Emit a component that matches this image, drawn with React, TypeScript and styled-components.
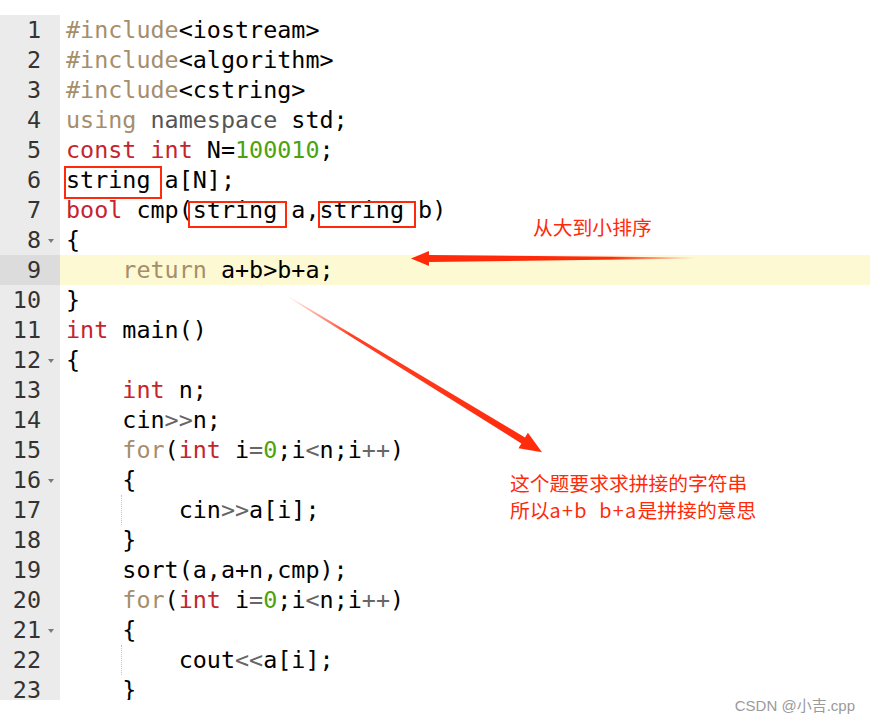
import React from "react";
import styled, { createGlobalStyle } from "styled-components";

const GlobalStyle = createGlobalStyle`
  html, body { margin: 0; padding: 0; background: #ffffff; }
  body { width: 870px; height: 722px; overflow: hidden; }
`;

const MONO = `"DejaVu Sans Mono", "Liberation Mono", monospace`;
const CJK = `"Noto Sans CJK SC", "Noto Sans", sans-serif`;

const Page = styled.div`
  position: relative;
  box-sizing: border-box;
  width: 870px;
  height: 722px;
  padding-top: 15px;
  background: #ffffff;
`;

const Editor = styled.div`
  display: flex;
  height: 685px;
  overflow: hidden;
  font-family: ${MONO};
  font-size: 23.4px;
  line-height: 30px;
`;

const Gutter = styled.div`
  width: 60px;
  flex: none;
  background: #ebebeb;
  display: flex;
  flex-direction: column;
`;

const GutterCell = styled.div<{ $active?: boolean }>`
  display: grid;
  grid-template-columns: 41px 19px;
  align-items: center;
  height: 30px;
  flex: none;
  color: #333333;
  background: ${(p) => (p.$active ? "#dcdcdc" : "transparent")};
`;

const LineNo = styled.span`
  text-align: right;
`;

const Fold = styled.span<{ $show?: boolean }>`
  justify-self: start;
  margin-left: 7px;
  margin-top: 1px;
  width: 0;
  height: 0;
  border-left: 3.5px solid transparent;
  border-right: 3.5px solid transparent;
  border-top: 4px solid ${(p) => (p.$show ? "#7a7a7a" : "transparent")};
`;

const Code = styled.div`
  flex: 1;
  display: flex;
  flex-direction: column;
`;

const Line = styled.div<{ $active?: boolean }>`
  height: 30px;
  flex: none;
  padding-left: 6px;
  white-space: pre;
  color: #000000;
  background: ${(p) => (p.$active ? "#fdf9d2" : "transparent")};
`;

const COLORS: Record<string, string> = {
  kw: "#c4252c",
  pp: "#a58e6c",
  num: "#4aa30e",
  ns: "#555555",
  op: "#666666",
  "": "#000000",
};

const Tok = styled.span<{ $k: string }>`
  color: ${(p) => COLORS[p.$k] || "#000000"};
`;

const Boxed = styled.span<{ $l: number; $r: number; $t: number; $b: number }>`
  position: relative;
  display: inline-block;
  height: 30px;
  vertical-align: top;
  &::after {
    content: "";
    position: absolute;
    left: ${(p) => p.$l}px;
    right: ${(p) => p.$r}px;
    top: ${(p) => p.$t}px;
    bottom: ${(p) => p.$b}px;
    border: 2px solid #ff2a0a;
  }
`;

const Guide = styled.span`
  display: inline-block;
  width: 0;
  height: 30px;
  vertical-align: top;
  margin-left: -1px;
  border-left: 1px dotted #c4c4c4;
  box-sizing: border-box;
`;

const Overlay = styled.svg`
  position: absolute;
  left: 0;
  top: 0;
  pointer-events: none;
`;

const Note = styled.div<{ $x: number; $y: number }>`
  position: absolute;
  left: ${(p) => p.$x}px;
  top: ${(p) => p.$y}px;
  font-family: ${CJK};
  font-size: 19.8px;
  line-height: 27px;
  color: #ff2a0a;
  white-space: pre;
`;

const Latin = styled.span`
  letter-spacing: 1.3px;
`;

const Watermark = styled.div`
  position: absolute;
  right: 15px;
  bottom: 8px;
  font-family: "Liberation Sans", "Noto Sans CJK SC", sans-serif;
  font-size: 15px;
  line-height: 17px;
  color: #9a9a9a;
`;

type Seg =
  | { t: string; k?: string }
  | { box: [number, number, number, number]; t: string }
  | { guide: true };

const s = (t: string, k = ""): Seg => ({ t, k });
const box = (t: string, l: number, r: number, top: number, b: number): Seg => ({ t, box: [l, r, top, b] });
const guide: Seg = { guide: true };

const forLine: Seg[] = [
  s("    "), s("for", "pp"), s("("), s("int", "kw"), s(" i"), s("=", "op"), s("0", "num"),
  s(";i"), s("<", "op"), s("n;i"), s("++", "op"), s(")"),
];

const LINES: Seg[][] = [
  [s("#include", "pp"), s("<iostream>")],
  [s("#include", "pp"), s("<algorithm>")],
  [s("#include", "pp"), s("<cstring>")],
  [s("using", "pp"), s(" "), s("namespace", "ns"), s(" std;")],
  [s("const", "kw"), s(" "), s("int", "kw"), s(" N="), s("100010", "num"), s(";")],
  [box("string ", -2, 3, 1, -4), s("a[N];")],
  [s("bool", "kw"), s(" cmp("), box("string ", -5, 4, 6, -3), s("a,"), box("string ", -2, 2, 6, -3), s("b)")],
  [s("{")],
  [s("    "), s("return", "pp"), s(" a+b>b+a;")],
  [s("}")],
  [s("int", "kw"), s(" main()")],
  [s("{")],
  [s("    "), s("int", "kw"), s(" n;")],
  [s("    cin"), s(">>", "op"), s("n;")],
  forLine,
  [s("    {")],
  [s("    "), guide, s("    cin"), s(">>", "op"), s("a[i];")],
  [s("    }")],
  [s("    sort(a,a+n,cmp);")],
  forLine,
  [s("    {")],
  [s("    "), guide, s("    cout"), s("<<", "op"), s("a[i];")],
  [s("    }")],
];

const FOLDS = new Set([8, 12, 16, 21]);
const ACTIVE = 9;

function renderSeg(seg: Seg, i: number) {
  if ("guide" in seg) return <Guide key={i} />;
  if ("box" in seg) {
    const [l, r, t, b] = seg.box;
    return (
      <Boxed key={i} $l={l} $r={r} $t={t} $b={b}>
        {seg.t}
      </Boxed>
    );
  }
  return (
    <Tok key={i} $k={seg.k || ""}>
      {seg.t}
    </Tok>
  );
}

export default function App() {
  return (
    <Page>
      <GlobalStyle />
      <Editor>
        <Gutter>
          {LINES.map((_, i) => (
            <GutterCell key={i} $active={i + 1 === ACTIVE}>
              <LineNo>{i + 1}</LineNo>
              <Fold $show={FOLDS.has(i + 1)} />
            </GutterCell>
          ))}
        </Gutter>
        <Code>
          {LINES.map((segs, i) => (
            <Line key={i} $active={i + 1 === ACTIVE}>
              {segs.map(renderSeg)}
            </Line>
          ))}
        </Code>
      </Editor>

      <Overlay width="870" height="722" viewBox="0 0 870 722">
        <defs>
          <linearGradient id="fadeH" gradientUnits="userSpaceOnUse" x1="411" y1="0" x2="697" y2="0">
            <stop offset="0" stopColor="#ff2a0a" stopOpacity="1" />
            <stop offset="0.7" stopColor="#ff2a0a" stopOpacity="1" />
            <stop offset="1" stopColor="#ff2a0a" stopOpacity="0" />
          </linearGradient>
          <linearGradient id="fadeD" gradientUnits="userSpaceOnUse" x1="287" y1="296" x2="542" y2="452">
            <stop offset="0" stopColor="#ff2a0a" stopOpacity="0" />
            <stop offset="0.25" stopColor="#ff2a0a" stopOpacity="0.9" />
            <stop offset="1" stopColor="#ff2a0a" stopOpacity="1" />
          </linearGradient>
        </defs>
        <polygon
          points="697,257.4 429,255 429,251 411,258.6 429,266 429,262 697,258.6"
          fill="url(#fadeH)"
        />
        <polygon
          points="287.3,295.6 525,437.5 527.9,432.8 542,452.3 518.5,448.2 521.4,443.5 286.7,296.4"
          fill="url(#fadeD)"
        />
      </Overlay>

      <Note $x={533} $y={213}>从大到小排序</Note>
      <Note $x={510} $y={469}>
        这个题要求求拼接的字符串
        {"\n"}所以<Latin>{"a+b  b+a"}</Latin>是拼接的意思
      </Note>
      <Watermark>CSDN @小吉.cpp</Watermark>
    </Page>
  );
}
